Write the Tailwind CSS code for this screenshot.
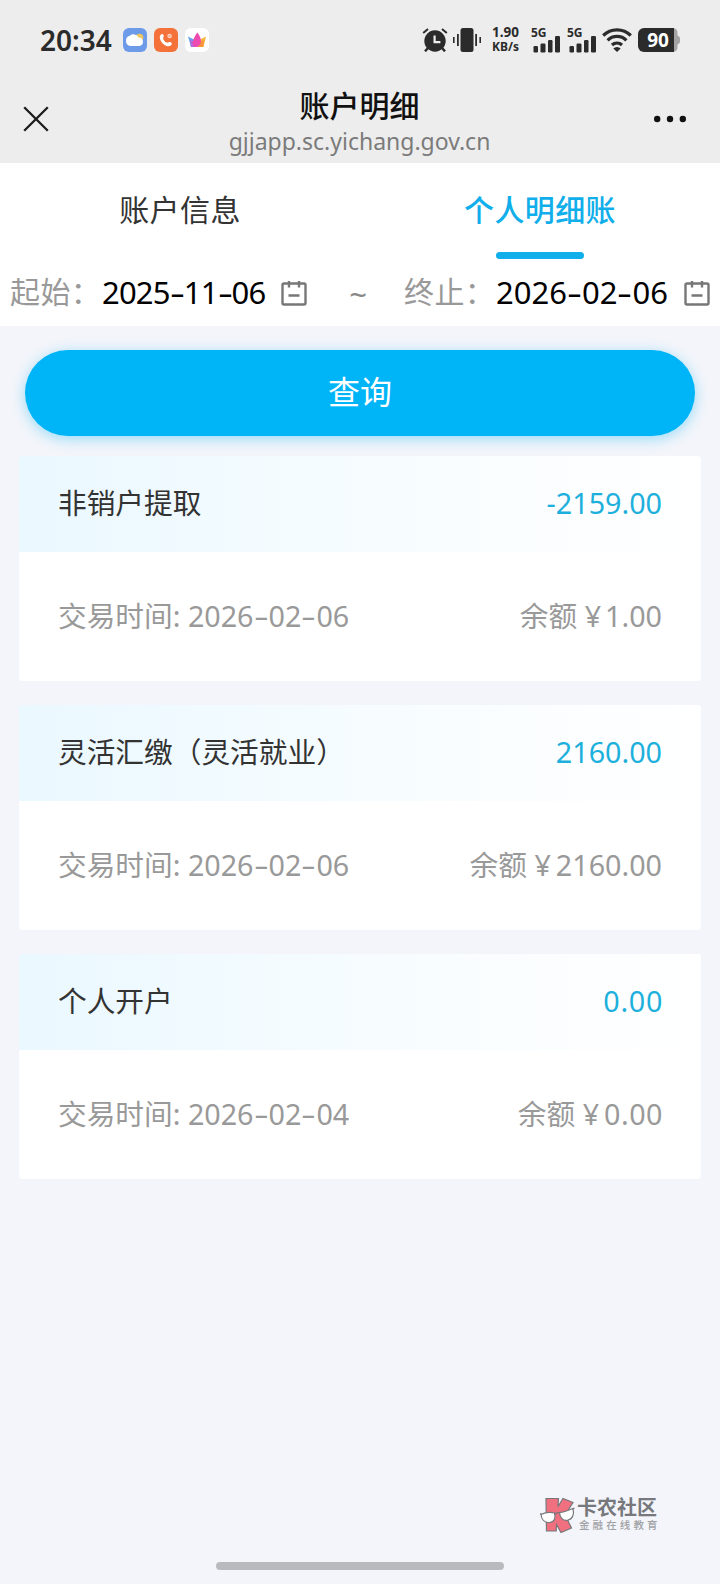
<!DOCTYPE html>
<html lang="zh-CN">
<head>
<meta charset="utf-8">
<title>账户明细</title>
<script src="https://cdn.jsdelivr.net/npm/@tailwindcss/browser@4"></script>
</head>
<body class="w-[720px] h-[1584px] overflow-hidden bg-[#f3f5fa] font-['Noto_Sans','Noto_Sans_CJK_SC',sans-serif] whitespace-nowrap flex flex-col">
  <header class="h-[163px] shrink-0 bg-[#ededed] text-[#2b2b2b]">
    <div class="h-20 flex items-center pl-10 pr-[41px]">
      <span class="w-[83px] text-[28px] leading-10 font-semibold">20:34</span>
      <div class="flex gap-[7px]">
        <svg class="size-6" viewBox="0 0 24 24"><rect width="24" height="24" rx="6" fill="#6d9bea"/><circle cx="16.500" cy="9.500" r="3.800" fill="#efc75e"/><path d="M8 18a5.200 5.200 0 0 1-1.200-10.200 5.600 5.600 0 0 1 8.800 1.700A4.300 4.300 0 0 1 16.600 18z" fill="#fff"/></svg>
        <svg class="size-6" viewBox="0 0 24 24"><rect width="24" height="24" rx="6" fill="#f4713a"/><path d="M6.500 7c1.200-1.500 2.400-1.300 3.100.2.7 1.700-.9 2.300-.4 3.700.7 1.900 2 3.100 3.800 3.700 1.400.4 2-1.100 3.700-.4 1.600.7 1.600 2 .1 3.200-2 1.600-5.300.8-8-2-2.800-2.800-3.800-6.500-2.300-8.400z" fill="#fff"/><circle cx="15.600" cy="8" r="2.300" fill="#fbd3c0"/><path d="M14.500 9l2-2" stroke="#f4713a" stroke-width=".8"/></svg>
        <svg class="size-6" viewBox="0 0 24 24"><rect width="24" height="24" rx="6" fill="#fff"/><path d="M3 8.500L10 12l-1 7H6z" fill="#6aa2ee"/><path d="M21 8.500l-7 3.500v7h4.500z" fill="#f7b53c"/><path d="M5 12l6 2 1 5H6z" fill="#b566dc"/><path d="M19 12l-6 2-1 5h6z" fill="#fa943c"/><path d="M12.300 4.500c2.500 3 4 6.500 3.500 9.500S13 19 11 19 6.800 17 7.800 13.500 10.300 7 12.300 4.500z" fill="#ee4bb0"/></svg>
      </div>
      <div class="ml-auto flex items-center">
        <svg class="w-[26px] h-6" viewBox="0 0 26 24" fill="none" stroke="#2b2b2b"><circle cx="13" cy="13" r="10.700" fill="#2b2b2b" stroke="none"/><path d="M1.200 5L6 1M24.800 5L20 1" stroke-width="2"/><path d="M6 20l-3 3.300M20 20l3 3.300" stroke-width="2.500"/><path d="M12.600 7.500v6.700h5.800" stroke="#ededed" stroke-width="2.200"/></svg>
        <svg class="w-7 h-6 ml-[5px]" viewBox="0 0 28 24" fill="#2b2b2b"><rect x="7.500" width="13" height="24" rx="2.500"/><path d="M0 9h1.600v6H0zM4 6h1.800v12H4zM22.200 6H24v12h-1.800zM26.400 9H28v6h-1.600z"/></svg>
        <div class="w-[29px] ml-[10px] flex flex-col items-center font-bold"><span class="text-[13.500px] leading-[15px] h-[14px] -mt-px">1.90</span><span class="text-[12px] leading-[14px] h-[14px] mt-px">KB/s</span></div>
        <div class="relative w-7 h-6 ml-[12px]"><span class="absolute -left-px -top-[3px] text-[12px] leading-4 font-bold">5G</span><svg class="size-full overflow-visible" viewBox="0 0 28 24" fill="#2b2b2b"><rect x="1.500" y="18" width="4.500" height="6.500" rx="1.200"/><rect x="8.500" y="15.500" width="5" height="9" rx="1.200"/><rect x="16" y="12" width="4.500" height="12.500" rx="1.200"/><rect x="23" y="8" width="5" height="16.500" rx="1.200"/></svg></div>
        <div class="relative w-7 h-6 ml-[8px]"><span class="absolute -left-px -top-[3px] text-[12px] leading-4 font-bold">5G</span><svg class="size-full overflow-visible" viewBox="0 0 28 24" fill="#2b2b2b"><rect x="1.500" y="18" width="4.500" height="6.500" rx="1.200"/><rect x="8.500" y="15.500" width="5" height="9" rx="1.200"/><rect x="16" y="12" width="4.500" height="12.500" rx="1.200"/><rect x="23" y="8" width="5" height="16.500" rx="1.200"/></svg></div>
        <svg class="w-[30px] h-6 ml-[6px]" viewBox="0 0 30 24" fill="none" stroke="#2b2b2b" stroke-width="3.200"><path d="M1.200 7.500a19.500 19.500 0 0 1 27.600 0M5.600 12.300a13.200 13.200 0 0 1 18.800 0M10 17a7.300 7.300 0 0 1 10 0"/><path d="M11.300 20.500L15 24l3.700-3.500a5.200 5.200 0 0 0-7.400 0z" fill="#2b2b2b" stroke="none"/></svg>
        <div class="relative ml-[6px] -mr-px w-[42px] h-6"><svg class="absolute size-full" viewBox="0 0 42 24"><path d="M35 0a5 5 0 0 1 4.500 5v2.500a5 5 0 0 1 0 9V19a5 5 0 0 1-4.500 5z" fill="#a4a4a4"/><path d="M6 0h30v24H6a6 6 0 0 1-6-6V6a6 6 0 0 1 6-6z" fill="#2b2b2b"/></svg><span class="absolute left-0 top-0 w-[40px] text-center text-[19px] leading-6 font-bold text-white">90</span></div>
      </div>
    </div>
    <div class="h-[83px] flex justify-between pl-[23px] pr-[34px]">
      <svg class="w-[26px] h-[26px] mt-[26px]" viewBox="0 0 26 26" stroke="#1c1c1c" stroke-width="2.300"><path d="M1.200 1.200l23.600 23.600M24.800 1.200L1.200 24.800"/></svg>
      <div class="ml-[16px] text-center">
        <h1 class="mt-[5px] text-[30px] leading-[42px] font-medium text-[#111]">账户明细</h1>
        <p class="text-[23px] leading-7 text-[#7b7b7b]">gjjapp.sc.yichang.gov.cn</p>
      </div>
      <svg class="w-8 h-2 mt-[35px]" viewBox="0 0 32 8" fill="#111"><circle cx="3.200" cy="4" r="3.200"/><circle cx="16" cy="4" r="3.200"/><circle cx="28.800" cy="4" r="3.200"/></svg>
    </div>
  </header>

  <section class="h-[163px] shrink-0 bg-white">
    <nav class="grid grid-cols-2 h-[97px] text-center text-[30px] leading-[44px] tracking-[0.4px]">
      <div class="pt-[25px] text-[#333]">账户信息</div>
      <div class="pt-[25px] text-[#10aeea] font-medium flex flex-col items-center">个人明细账<span class="mt-5 w-[88px] h-[7px] shrink-0 rounded-full bg-[#10aeea]"></span></div>
    </nav>
    <div class="h-[66px] flex items-center pb-[2px] pl-[10px] text-[31px] leading-10 text-black">
      <span class="w-[92px] text-[30px] text-[#999] tracking-[0.4px]">起始：</span>
      <span class="w-[179px] tracking-[-0.8px]">2025<span class="inline-block w-[14px] text-center scale-x-150">-</span>11<span class="inline-block w-[14px] text-center scale-x-150">-</span>06</span>
      <svg class="w-[26px] h-[26px] mt-px" viewBox="0 0 26 26" fill="none" stroke="#777" stroke-width="2.400"><rect x="1.500" y="3.500" width="23" height="21" rx="1.500"/><path d="M8 1v6.500M18 1v6.500M7.500 15.500h11"/></svg>
      <span class="w-[97px] pl-[5px] pt-[3px] text-center text-[#888]">~</span>
      <span class="w-[92px] text-[30px] text-[#999] tracking-[0.4px]">终止：</span>
      <span class="w-[188px]">2026<span class="inline-block w-[15px] text-center scale-x-150">-</span>02<span class="inline-block w-[15px] text-center scale-x-150">-</span>06</span>
      <svg class="w-[26px] h-[26px] mt-px" viewBox="0 0 26 26" fill="none" stroke="#777" stroke-width="2.400"><rect x="1.500" y="3.500" width="23" height="21" rx="1.500"/><path d="M8 1v6.500M18 1v6.500M7.500 15.500h11"/></svg>
    </div>
  </section>

  <button class="mt-6 mx-[25px] h-[86px] pb-[2px] shrink-0 rounded-full bg-[#00b4f8] text-white text-[32px] leading-10 shadow-[0_3px_14px_rgba(0,180,248,0.38)]">查询</button>

  <main class="mt-5 mx-[19px] flex flex-col gap-[24px] text-[28.700px] leading-10">
    <article class="h-[225px] bg-white rounded-[4px] overflow-hidden">
      <div class="h-24 px-[39px] pb-[3px] flex items-center justify-between bg-linear-to-r from-[#eaf8ff] via-[#f6fcff] to-white"><h2 class="text-[#333]">非销户提取</h2><span class="text-[#1db0dc]">-2159.00</span></div>
      <div class="h-[130px] px-[39px] pb-[3px] flex items-center justify-between text-[#999]"><span>交易时间: 2026<span class="inline-block w-[15px] text-center scale-x-160">-</span>02<span class="inline-block w-[15px] text-center scale-x-160">-</span>06</span><span>余额 ¥<span class="ml-[4px]">1.00</span></span></div>
    </article>
    <article class="h-[225px] bg-white rounded-[4px] overflow-hidden">
      <div class="h-24 px-[39px] pb-[3px] flex items-center justify-between bg-linear-to-r from-[#eaf8ff] via-[#f6fcff] to-white"><h2 class="text-[#333]">灵活汇缴（灵活就业）</h2><span class="text-[#1db0dc]">2160.00</span></div>
      <div class="h-[130px] px-[39px] pb-[3px] flex items-center justify-between text-[#999]"><span>交易时间: 2026<span class="inline-block w-[15px] text-center scale-x-160">-</span>02<span class="inline-block w-[15px] text-center scale-x-160">-</span>06</span><span>余额 ¥<span class="ml-[5px]">2160.00</span></span></div>
    </article>
    <article class="h-[225px] bg-white rounded-[4px] overflow-hidden">
      <div class="h-24 px-[39px] pb-[3px] flex items-center justify-between bg-linear-to-r from-[#eaf8ff] via-[#f6fcff] to-white"><h2 class="text-[#333]">个人开户</h2><span class="text-[#1db0dc] tracking-[0.7px] -mr-px">0.00</span></div>
      <div class="h-[130px] px-[39px] pb-[3px] flex items-center justify-between text-[#999]"><span>交易时间: 2026<span class="inline-block w-[15px] text-center scale-x-160">-</span>02<span class="inline-block w-[15px] text-center scale-x-160">-</span>04</span><span>余额 ¥<span class="ml-[5px] tracking-[0.5px] -mr-px">0.00</span></span></div>
    </article>
  </main>

  <footer class="mt-auto shrink-0">
    <div class="flex pl-[540px] h-[65px]">
      <svg class="w-[35px] h-9" viewBox="0 0 35 36" stroke="#77777c" stroke-width="1.200"><path d="M6 1.500h12.500l-.5 8L23 1.500l10 4-8 12.500 6.500 13L21 35.500l-4.500-8-.3 6.500H6.500z" fill="#f0707f"/><path d="M1 17.500c4-2 9-2.500 13.500-1.500 1.500 4.500.3 9-5 9.500S1.500 22 1 17.500zM19.500 15.500c4-.3 9-2 13.500-4 1.500 6-.5 11-5.500 11.800s-7.700-3.500-8-7.800z" fill="#fff"/><path d="M14.500 17.500c1.500-1.500 3.500-2.200 5-1.500M0 16.500l2 1M32.500 12l2-1" fill="none"/></svg>
      <div class="ml-[2px]">
        <div class="text-[20px] leading-[22px] font-bold text-[#77787c]">卡农社区</div>
        <div class="ml-[2px] text-[10.500px] leading-3 tracking-[3.100px] font-medium text-[#a0a1a5]">金融在线教育</div>
      </div>
    </div>
    <div class="w-[288px] h-2 mx-auto mb-[14px] rounded-full bg-[#b9babe]"></div>
  </footer>
</body>
</html>
